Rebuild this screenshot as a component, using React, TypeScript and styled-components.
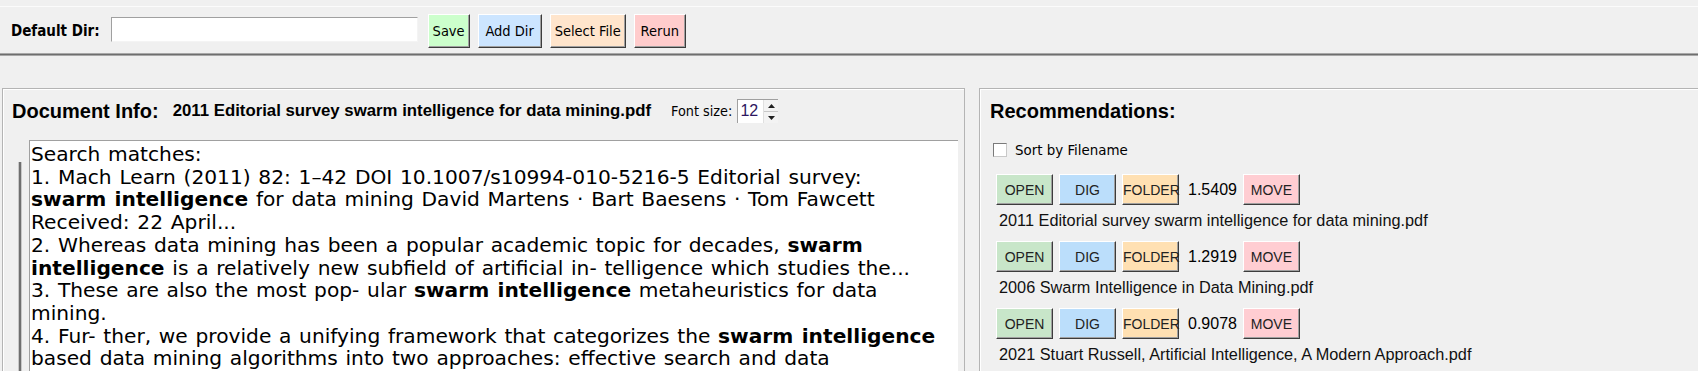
import React from "react";
import styled, { createGlobalStyle } from "styled-components";

const TAHOMA = `"DejaVu Sans Condensed", "DejaVu Sans", sans-serif`;
const ARIAL = `"Liberation Sans", Arial, sans-serif`;
const NARROW = `"Liberation Sans Narrow", "Arial Narrow", "Liberation Sans", sans-serif`;
const VERDANA = `"DejaVu Sans", Verdana, sans-serif`;

const GlobalStyle = createGlobalStyle`
  html, body { margin: 0; padding: 0; background: #f0f0f0; overflow: hidden; }
  #root { width: 1698px; height: 371px; overflow: hidden; }
  * { box-sizing: border-box; }
`;

const Page = styled.div`
  display: flex;
  flex-direction: column;
  padding-top: 6px;
  width: 1698px;
  height: 371px;
  overflow: hidden;
  & > * { flex-shrink: 0; }
`;

const Toolbar = styled.div`
  display: flex;
  align-items: center;
  height: 47px;
  border-top: 1px solid #fbfbfb;
  padding-left: 11px;
  padding-top: 1px;
`;

const ToolLabel = styled.span`
  font-family: ${TAHOMA};
  font-weight: bold;
  font-size: 15px;
  color: #000;
  margin-right: 11px;
`;

const Entry = styled.div`
  width: 307px;
  height: 25px;
  background: #fff;
  border-top: 1px solid #a0a0a0;
  border-left: 1px solid #a0a0a0;
  border-right: 1px solid #f4f4f4;
  border-bottom: 1px solid #f4f4f4;
  margin-right: 10px;
  margin-top: -2px;
`;

const ToolButton = styled.button<{ $bg: string; $minW?: number }>`
  height: 34px;
  min-width: ${(p) => (p.$minW ? `${p.$minW}px` : "0")};
  padding: 0 4px;
  margin-right: 8px;
  font-family: ${TAHOMA};
  font-size: 14.5px;
  color: #000;
  background: ${(p) => p.$bg};
  border: 1px solid;
  border-color: #ffffff #3c3c3c #3c3c3c #ffffff;
  box-shadow: inset -1px -1px 0 #a0a0a0;
  border-radius: 0;
`;

const Separator = styled.div`
  height: 3px;
  background: #6e6e6e;
  border-top: 1px solid #a8a8a8;
  border-bottom: 1px solid #a8a8a8;
`;

const Main = styled.div`
  display: flex;
  align-items: flex-start;
  gap: 14px;
  padding: 32px 0 0 2px;
`;

const Panel = styled.section<{ $width: number }>`
  width: ${(p) => p.$width}px;
  height: 320px;
  flex: none;
  border: 1px solid #b4b4b4;
  box-shadow: inset 1px 1px 0 #ffffff;
  display: flex;
  flex-direction: column;
`;

const HeaderRow = styled.div`
  display: flex;
  align-items: center;
  height: 24px;
  margin-top: 10px;
  padding-left: 9px;
`;

const Heading = styled.h2`
  margin: 0;
  font-family: ${ARIAL};
  font-weight: bold;
  font-size: 20px;
  line-height: 24px;
  color: #000;
`;

const DocName = styled.span`
  font-family: ${ARIAL};
  font-weight: bold;
  font-size: 16.8px;
  line-height: 24px;
  color: #000;
  margin-left: 14px;
  margin-right: 20px;
`;

const SmallLabel = styled.span`
  font-family: ${TAHOMA};
  font-size: 14.3px;
  color: #000;
  margin-right: 5px;
`;

const Spin = styled.div`
  width: 41px;
  height: 24px;
  background: #fff;
  border-top: 1px solid #a0a0a0;
  border-left: 1px solid #a0a0a0;
  display: flex;
`;

const SpinValue = styled.span`
  flex: 1;
  font-family: ${ARIAL};
  font-size: 16px;
  line-height: 22px;
  padding-left: 2px;
  color: #2d1660;
`;

const SpinArrows = styled.div`
  width: 15px;
  display: flex;
  flex-direction: column;
  background: #f3f3f3;
  border-left: 1px solid #e0e0e0;
`;

const SpinHalf = styled.div<{ $top?: boolean }>`
  flex: 1;
  display: flex;
  align-items: center;
  justify-content: center;
  border-bottom: ${(p) => (p.$top ? "1px solid #c8c8c8" : "none")};
`;

const Body = styled.div`
  display: flex;
  margin-top: 17px;
`;

const Gutter = styled.div`
  width: 26px;
  flex: none;
  display: flex;
  padding-left: 15px;
  padding-top: 22px;
`;

const GutterBar = styled.div`
  width: 4px;
  height: 240px;
  background: #6f6f6f;
  border-left: 1px solid #c8c8c8;
  border-right: 1px solid #c8c8c8;
`;

const TextArea = styled.div`
  width: 929px;
  height: 260px;
  background: #fff;
  border-top: 1px solid #a0a0a0;
  border-left: 1px solid #a0a0a0;
  padding: 2px 0 0 1px;
  font-family: ${VERDANA};
  font-size: 20.2px;
  word-spacing: 1.3px;
  line-height: 22.7px;
  color: #000;
  overflow: hidden;
`;

const TextLine = styled.div`
  white-space: nowrap;
`;

const RightInner = styled.div`
  display: flex;
  flex-direction: column;
  padding-left: 10px;
`;

const RecHeading = styled(Heading)`
  margin-top: 10px;
`;

const CheckRow = styled.label`
  display: flex;
  align-items: center;
  height: 20px;
  margin-top: 17px;
  padding-left: 3px;
  font-family: ${TAHOMA};
  font-size: 14.9px;
  color: #000;
`;

const CheckBox = styled.span`
  width: 14px;
  height: 14px;
  background: #fff;
  border: 1px solid #7a7a7a;
  border-right-color: #c8c8c8;
  border-bottom-color: #c8c8c8;
  margin-right: 8px;
`;

const ResultList = styled.div`
  display: flex;
  flex-direction: column;
  gap: 11px;
  margin-top: 14px;
  padding-left: 6px;
`;

const Result = styled.div`
  display: flex;
  flex-direction: column;
`;

const ActionRow = styled.div`
  display: flex;
  align-items: center;
  height: 31px;
  gap: 6px;
`;

const ActionButton = styled.button<{ $bg: string }>`
  width: 57px;
  height: 31px;
  padding: 0;
  font-family: ${NARROW};
  font-size: 14px;
  color: #222;
  background: ${(p) => p.$bg};
  border: 1px solid;
  border-color: #ffffff #3c3c3c #3c3c3c #ffffff;
  box-shadow: inset -1px -1px 0 #a0a0a0;
  border-radius: 0;
`;

const Score = styled.span`
  font-family: ${ARIAL};
  font-size: 16px;
  color: #000;
  padding: 0 0 0 3px;
`;

const FileName = styled.div`
  margin-top: 5px;
  padding-left: 3px;
  font-family: ${ARIAL};
  font-size: 16.3px;
  line-height: 20px;
  color: #111;
  white-space: nowrap;
`;

type Seg = { t: string; b?: boolean };
const lines: Seg[][] = [
  [{ t: "Search matches:" }],
  [{ t: "1. Mach Learn (2011) 82: 1–42 DOI 10.1007/s10994-010-5216-5 Editorial survey:" }],
  [{ t: "swarm intelligence", b: true }, { t: " for data mining David Martens · Bart Baesens · Tom Fawcett" }],
  [{ t: "Received: 22 April..." }],
  [{ t: "2. Whereas data mining has been a popular academic topic for decades, " }, { t: "swarm", b: true }],
  [{ t: "intelligence", b: true }, { t: " is a relatively new subfield of artificial in- telligence which studies the..." }],
  [{ t: "3. These are also the most pop- ular " }, { t: "swarm intelligence", b: true }, { t: " metaheuristics for data" }],
  [{ t: "mining." }],
  [{ t: "4. Fur- ther, we provide a unifying framework that categorizes the " }, { t: "swarm intelligence", b: true }],
  [{ t: "based data mining algorithms into two approaches: effective search and data" }],
];

const results = [
  { score: "1.5409", name: "2011 Editorial survey swarm intelligence for data mining.pdf" },
  { score: "1.2919", name: "2006 Swarm Intelligence in Data Mining.pdf" },
  { score: "0.9078", name: "2021 Stuart Russell, Artificial Intelligence, A Modern Approach.pdf" },
];

const Tri = ({ up }: { up?: boolean }) => (
  <svg width="7" height="4" viewBox="0 0 7 4">
    <path d={up ? "M0 4 L3.5 0 L7 4 Z" : "M0 0 L3.5 4 L7 0 Z"} fill="#202020" />
  </svg>
);

export default function App() {
  return (
    <Page>
      <GlobalStyle />
      <Toolbar>
        <ToolLabel>Default Dir:</ToolLabel>
        <Entry />
        <ToolButton $bg="#ccffcc">Save</ToolButton>
        <ToolButton $bg="#cce5ff" $minW={64}>Add Dir</ToolButton>
        <ToolButton $bg="#ffe5cc">Select File</ToolButton>
        <ToolButton $bg="#ffcccc" $minW={52}>Rerun</ToolButton>
      </Toolbar>
      <Separator />
      <Main>
        <Panel $width={963}>
          <HeaderRow>
            <Heading>Document Info:</Heading>
            <DocName>2011 Editorial survey swarm intelligence for data mining.pdf</DocName>
            <SmallLabel>Font size:</SmallLabel>
            <Spin>
              <SpinValue>12</SpinValue>
              <SpinArrows>
                <SpinHalf $top>
                  <Tri up />
                </SpinHalf>
                <SpinHalf>
                  <Tri />
                </SpinHalf>
              </SpinArrows>
            </Spin>
          </HeaderRow>
          <Body>
            <Gutter>
              <GutterBar />
            </Gutter>
            <TextArea>
              {lines.map((segs, i) => (
                <TextLine key={i}>
                  {segs.map((s, j) => (s.b ? <b key={j}>{s.t}</b> : <span key={j}>{s.t}</span>))}
                </TextLine>
              ))}
            </TextArea>
          </Body>
        </Panel>
        <Panel $width={730}>
          <RightInner>
            <RecHeading>Recommendations:</RecHeading>
            <CheckRow>
              <CheckBox />
              Sort by Filename
            </CheckRow>
            <ResultList>
              {results.map((r) => (
                <Result key={r.name}>
                  <ActionRow>
                    <ActionButton $bg="#c8e6c9">OPEN</ActionButton>
                    <ActionButton $bg="#bbdefb">DIG</ActionButton>
                    <ActionButton $bg="#ffe0b2">FOLDER</ActionButton>
                    <Score>{r.score}</Score>
                    <ActionButton $bg="#ffcdd2">MOVE</ActionButton>
                  </ActionRow>
                  <FileName>{r.name}</FileName>
                </Result>
              ))}
            </ResultList>
          </RightInner>
        </Panel>
      </Main>
    </Page>
  );
}
